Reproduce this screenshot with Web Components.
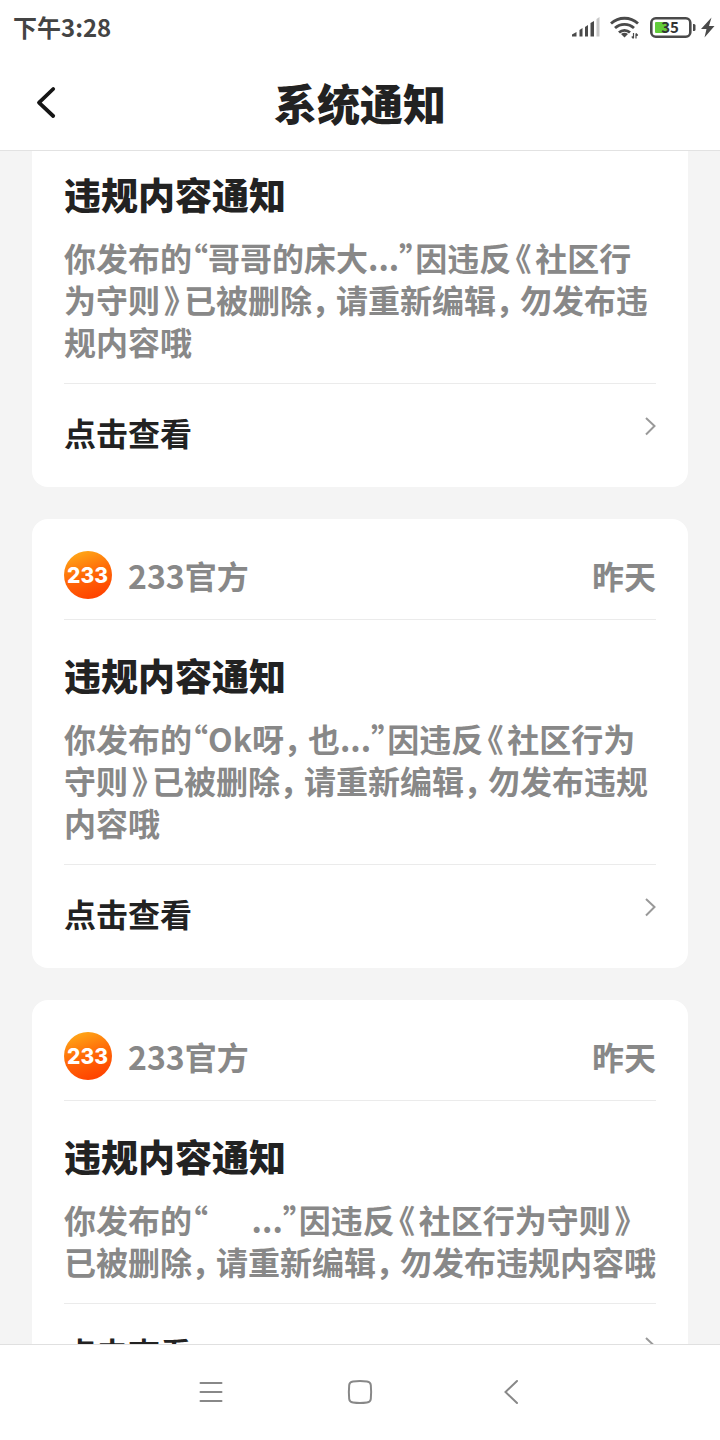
<!DOCTYPE html>
<html lang="zh-CN">
<head>
<meta charset="utf-8">
<meta name="viewport" content="width=device-width, initial-scale=1">
<title>系统通知</title>
<style>
  html, body { margin: 0; height: 100%; }
  body {
    background: #f4f4f4;
    color: #222;
    font-family: "Noto Sans CJK SC", sans-serif;
    font-weight: 700;
  }
</style>
</head>
<body>
<notice-app></notice-app>
<script>
const define = (name, html) => {
  const template = document.createElement("template");
  template.innerHTML = html;
  customElements.define(name, class extends HTMLElement {
    constructor() {
      super();
      this.attachShadow({ mode: "open" }).append(template.content.cloneNode(true));
    }
  });
};

define("status-bar", `
  <style>
    :host { display: flex; align-items: center; justify-content: space-between; height: 54px; padding: 0 0 0 13px; color: #444; background: #fff; }
    time { font-size: 24px; line-height: 32px; }
    svg { display: block; }
  </style>
  <time>下午3:28</time>
  <svg width="150" height="32" viewBox="0 3 150 32" fill="#4a4a4a" role="img" aria-label="信号、无线网络、电量 35">
    <path d="M2 26.500 6.500 24v4.500H2zM9.500 22l3-2v8.500h-3zM15 19l3-2v11.500h-3zM20.500 15l3.500-2v15.500h-3.500z"/>
    <path d="M26.500 11l3-2v19.500h-3z" fill="#c8c8c8"/>
    <path d="M41 15.500a20 20 0 0 1 27 0M45 20a14 14 0 0 1 19 0M49 24.500a8 8 0 0 1 11 0" fill="none" stroke="#4a4a4a" stroke-width="2.800"/>
    <path d="M54.500 29.500l-3.500-3.500q3.500-2.500 7 0z"/>
    <path d="M63.500 25v5M61.800 28.500l1.700 2M66 30.500v-5M66 25.500l1.800 2" stroke="#4a4a4a" stroke-width="1.200"/>
    <rect x="81.300" y="10.300" width="39" height="18.400" rx="4.500" fill="#fff" stroke="#4a4a4a" stroke-width="2.600"/>
    <rect x="85" y="14" width="12" height="11" rx="1" fill="#62cc3a"/>
    <path d="M123 16h1q1.500 0 1.500 1.500v4q0 1.500-1.500 1.500h-1z"/>
    <text x="100" y="25" text-anchor="middle" font-family="Noto Sans CJK SC, sans-serif" font-size="15" font-weight="700" fill="#333">35</text>
    <path d="M141.500 9.500 131 21h5.500l-2 8.500L144.500 18h-5.500z"/>
  </svg>
`);

define("title-bar", `
  <style>
    :host { display: grid; grid-template-columns: 92px 1fr 92px; align-items: center; height: 96px; background: #fff; border-bottom: 1px solid #e2e2e2; }
    button { display: grid; place-items: center; height: 96px; padding: 0; border: 0; background: none; }
    h1 { margin: 0; text-align: center; font-size: 43px; line-height: 64px; font-weight: 900; }
  </style>
  <button type="button" aria-label="返回">
    <svg width="24" height="36" viewBox="0 0 24 36" fill="none" stroke="#151515" stroke-width="3.800" stroke-linecap="round" stroke-linejoin="round"><path d="M19.200 5 5 18.600 19.200 32"/></svg>
  </button>
  <h1><slot></slot></h1>
`);

define("brand-badge", `
  <style>
    :host { display: block; width: 48px; height: 48px; }
    svg { display: block; }
  </style>
  <svg width="48" height="48" viewBox="0 0 48 48" role="img" aria-label="233">
    <defs><linearGradient id="g" x1=".25" y1="0" x2=".6" y2="1"><stop offset="0" stop-color="#ffaa18"/><stop offset=".5" stop-color="#ff6a08"/><stop offset="1" stop-color="#ff4200"/></linearGradient></defs>
    <circle cx="24" cy="24" r="24" fill="url(#g)"/>
    <text x="23.500" y="32" text-anchor="middle" font-family="Inter, sans-serif" font-weight="800" font-size="21" fill="#fff">233</text>
  </svg>
`);

define("card-source", `
  <style>
    :host { display: flex; align-items: center; gap: 16px; height: 48px; padding: 32px 0 20px; border-bottom: 1px solid #ebebeb; font-size: 32px; line-height: 46px; color: #888; }
    .name { flex: 1; }
  </style>
  <brand-badge></brand-badge>
  <span class="name"><slot></slot></span>
  <slot name="when"></slot>
`);

define("cjk-mark", `
  <style>
    :host { display: inline-block; width: 24px; text-align: center; line-height: inherit; }
  </style><slot></slot>`);

define("notice-card", `
  <style>
    :host { display: block; padding: 0 32px; border-radius: 16px; background: #fff; }
    :host([continued]) { border-top-left-radius: 0; border-top-right-radius: 0; }
    h2 { margin: 0; padding-top: 28px; font-size: 37px; line-height: 54px; font-weight: 900; }
    :host([continued]) h2 { padding-top: 16px; }
    .body { margin: 0; padding: 15px 0 21px; border-bottom: 1px solid #ebebeb; font-size: 32px; line-height: 42px; color: #888; font-feature-settings: "palt"; white-space: nowrap; }
    a { display: flex; justify-content: space-between; height: 103px; color: inherit; text-decoration: none; font-size: 32px; line-height: 96px; }
    svg { display: block; margin-top: 32px; }
  </style>
  <slot name="source"></slot>
  <h2>违规内容通知</h2>
  <p class="body"><slot></slot></p>
  <a href="#">点击查看<svg width="12" height="20" viewBox="0 0 12 20" fill="none" stroke="#999" stroke-width="2"><path d="M2 2l8.500 8L2 18.500"/></svg></a>
`);

define("nav-bar", `
  <style>
    :host { display: flex; justify-content: center; align-items: center; gap: 102px; height: 95px; background: #fff; border-top: 1px solid #e0e0e0; }
    button { display: grid; place-items: center; width: 48px; height: 48px; padding: 0; border: 0; background: none; }
    svg { fill: none; stroke: #888; stroke-width: 2; stroke-linecap: round; }
  </style>
  <button type="button" aria-label="菜单"><svg width="28" height="28" viewBox="0 0 28 28"><path d="M4.500 4h21M4.500 13h21M4.500 22h21"/></svg></button>
  <button type="button" aria-label="主页"><svg width="28" height="28" viewBox="0 1 28 28"><path d="M7 3.500Q14 2.500 21 3.500 24.500 4 24.800 7q.7 7 0 14-.3 3-3.800 3.500-7 1-14 0Q3.500 24 3.200 21q-.7-7 0-14Q3.500 4 7 3.500z"/></svg></button>
  <button type="button" aria-label="后退"><svg width="28" height="28" viewBox="0 0 28 28"><path d="M21 2 9.500 13 21 24"/></svg></button>
`);

define("notice-app", `
  <style>
    :host { display: flex; flex-direction: column; height: 100vh; }
    status-bar, title-bar, nav-bar { flex: none; }
    main { flex: 1; min-height: 0; overflow: hidden; }
    .list { display: flex; flex-direction: column; gap: 32px; padding: 0 32px; }
  </style>
  <status-bar></status-bar>
  <title-bar>系统通知</title-bar>
  <main>
    <div class="list">
      <notice-card continued>你发布的“哥哥的床大...”因违反<cjk-mark>《</cjk-mark>社区行<br>为守则<cjk-mark>》</cjk-mark>已被删除<cjk-mark>，</cjk-mark>请重新编辑<cjk-mark>，</cjk-mark>勿发布违<br>规内容哦</notice-card>
      <notice-card>
        <card-source slot="source">233官方<span slot="when">昨天</span></card-source>你发布的“Ok呀<cjk-mark>，</cjk-mark>也...”因违反<cjk-mark>《</cjk-mark>社区行为<br>守则<cjk-mark>》</cjk-mark>已被删除<cjk-mark>，</cjk-mark>请重新编辑<cjk-mark>，</cjk-mark>勿发布违规<br>内容哦</notice-card>
      <notice-card>
        <card-source slot="source">233官方<span slot="when">昨天</span></card-source>你发布的“&nbsp;&nbsp;&nbsp;&nbsp;&nbsp;&nbsp;...”因违反<cjk-mark>《</cjk-mark>社区行为守则<cjk-mark>》</cjk-mark><br>已被删除<cjk-mark>，</cjk-mark>请重新编辑<cjk-mark>，</cjk-mark>勿发布违规内容哦</notice-card>
    </div>
  </main>
  <nav-bar></nav-bar>
</notice-app>
`);
</script>
</body>
</html>
